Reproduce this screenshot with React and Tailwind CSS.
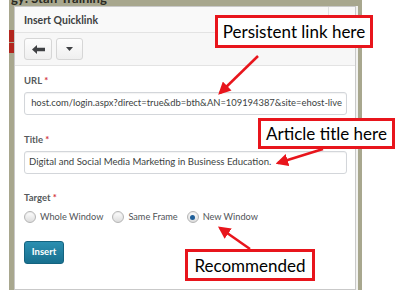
function Radio({ checked, label }) {
  return (
    <label className="flex items-center gap-[4px]">
      <span className="w-[12px] h-[12px] rounded-full border border-[#b5b5b5] bg-gradient-to-b from-white to-[#dcdcdc] flex items-center justify-center shadow-[inset_0_1px_1px_rgba(0,0,0,0.08)]">
        {checked && <span className="w-[5px] h-[5px] rounded-full bg-[#1f5f99]" />}
      </span>
      <span className="text-[9.2px] text-[#505458] leading-none">{label}</span>
    </label>
  );
}

function Label({ children }) {
  return (
    <div className="h-[10px] text-[9.5px] font-bold text-[#565a5c] leading-[10px]">
      {children} <span className="text-[#d2353a]">*</span>
    </div>
  );
}

function Callout({ className, children }) {
  return (
    <div
      className={`absolute border-[3px] border-[#e8151c] bg-white flex items-center justify-center text-[17px] text-black leading-none ${className}`}
      style={{ fontFamily: 'Lato, sans-serif' }}
    >
      {children}
    </div>
  );
}

export default function App() {
  return (
    <div className="relative w-[400px] h-[297px] bg-white overflow-hidden" style={{ fontFamily: 'Lato, "Open Sans", sans-serif' }}>
      {/* page behind the dialog */}
      <div className="ml-[9px] w-[353px] h-[290px] bg-[#a8a78e] flex flex-col">
        <div className="h-[6px] overflow-hidden">
          <div className="mt-[-8px] ml-[2px] text-[13px] font-bold text-[#2b2a22] leading-[12px]">gy: Staff Training</div>
        </div>
        <div className="flex flex-1 min-h-0">
          <div className="w-[5px] flex flex-col">
            <div className="h-[24px]" />
            <div className="h-[12px] bg-[#b3261e]" />
            <div className="h-[1px]" />
            <div className="h-[10px] bg-[#b3261e]" />
          </div>
          {/* dialog */}
          <div className="w-[342px] h-full border border-[#c9c9c9] bg-[#fbfbfb] flex flex-col">
            <div className="h-[26px] flex items-center pt-[2px] px-[9px] border-b border-[#e3e3e3] bg-[#f9f9f9] relative">
              <span className="text-[10.5px] font-bold text-[#3d3f41]">Insert Quicklink</span>
              <div className="absolute right-[26px] top-0 bottom-0 w-px bg-[#e0e0e0]" />
            </div>
            <div className="h-[33px] flex items-center gap-[4px] px-[9px] border-b border-[#e3e3e3] bg-[#f7f7f7]">
              <button className="w-[28px] h-[22px] rounded-[3px] border border-[#d6d6d6] bg-gradient-to-b from-[#fdfdfd] to-[#efefef] flex items-center justify-center">
                <svg width="13" height="9" viewBox="0 0 13 9">
                  <path d="M0 4.5 L5 0 L5 2.8 L13 2.8 L13 6.2 L5 6.2 L5 9 Z" fill="#3f4144" />
                </svg>
              </button>
              <button className="w-[27px] h-[22px] rounded-[3px] border border-[#d6d6d6] bg-gradient-to-b from-[#fdfdfd] to-[#efefef] flex items-center justify-center">
                <svg width="7" height="4" viewBox="0 0 7 4">
                  <path d="M0 0 L7 0 L3.5 4 Z" fill="#3f4144" />
                </svg>
              </button>
            </div>
            <div className="flex-1 bg-white pl-[9px] pr-[8px] pt-[10px]">
              <Label>URL</Label>
              <div className="mt-[6px] h-[23px] rounded-[3px] border border-[#d3d6da] bg-white flex items-center justify-end px-[4px] overflow-hidden whitespace-nowrap text-[9.4px] text-[#3c3f42] shadow-[inset_0_1px_1px_rgba(0,0,0,0.05)]">
                <span className="shrink-0">host.com/login.aspx?direct=true&amp;db=bth&amp;AN=109194387&amp;site=ehost-live</span>
              </div>
              <div className="mt-[20px]">
                <Label>Title</Label>
              </div>
              <div className="mt-[6px] h-[23px] rounded-[3px] border border-[#d3d6da] bg-white flex items-center px-[4px] overflow-hidden whitespace-nowrap text-[9.6px] text-[#3c3f42] shadow-[inset_0_1px_1px_rgba(0,0,0,0.05)]">
                Digital and Social Media Marketing in Business Education.
              </div>
              <div className="mt-[19px]">
                <Label>Target</Label>
              </div>
              <div className="mt-[8px] flex items-center gap-[9px]">
                <Radio label="Whole Window" />
                <Radio label="Same Frame" />
                <Radio checked label="New Window" />
              </div>
              <button className="mt-[18px] w-[40px] h-[23px] rounded-[3px] border border-[#14637f] bg-gradient-to-b from-[#2b8fb1] to-[#18708f] text-white text-[9.5px] font-bold">
                Insert
              </button>
            </div>
          </div>
          <div className="w-[2px] bg-[#f2f2f0]" />
        </div>
      </div>

      {/* callouts */}
      <Callout className="left-[215px] top-[15px] w-[158px] h-[33px]">Persistent link here</Callout>
      <Callout className="left-[258px] top-[118px] w-[137px] h-[31px]">Article title here</Callout>
      <Callout className="left-[185px] top-[249px] w-[130px] h-[32px]">Recommended</Callout>

      <svg className="absolute left-0 top-0 pointer-events-none" width="400" height="297">
        <defs>
          <marker id="head" markerWidth="5" markerHeight="5" refX="4" refY="2.5" orient="auto" markerUnits="strokeWidth">
            <path d="M0 0 L5 2.5 L0 5 Z" fill="#e8151c" />
          </marker>
        </defs>
        <line x1="258" y1="56" x2="220" y2="93" stroke="#e8151c" strokeWidth="2.5" markerEnd="url(#head)" />
        <line x1="323" y1="149" x2="278" y2="163" stroke="#e8151c" strokeWidth="2.5" markerEnd="url(#head)" />
        <line x1="250" y1="249" x2="220" y2="228" stroke="#e8151c" strokeWidth="2.5" markerEnd="url(#head)" />
      </svg>
    </div>
  );
}
